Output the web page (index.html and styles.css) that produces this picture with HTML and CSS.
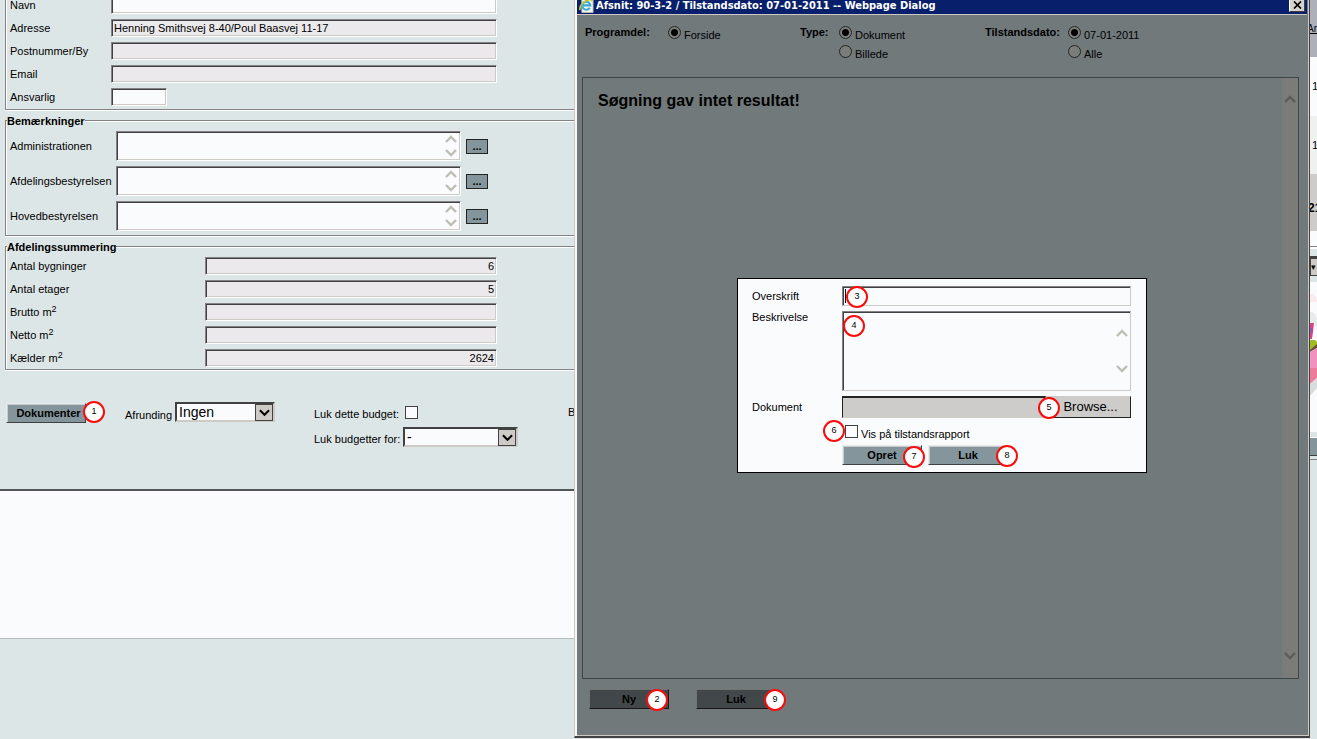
FILE: index.html
```html
<!DOCTYPE html>
<html lang="da">
<head>
<meta charset="utf-8">
<title>Afdeling</title>
<link rel="stylesheet" href="styles.css">
</head>
<body>
<svg class="defs" aria-hidden="true">
  <symbol id="up" viewBox="0 0 12 8"><path d="M1 7L6 2L11 7" fill="none" stroke="currentColor" stroke-width="2.4"/></symbol>
  <symbol id="down" viewBox="0 0 12 8"><path d="M1 1L6 6L11 1" fill="none" stroke="currentColor" stroke-width="2.4"/></symbol>
</svg>
<div class="page">
  <main class="form">
    <fieldset class="group group-first">
      <div class="row"><label class="name" for="navn">Navn</label><input class="box" id="navn" type="text"></div>
      <div class="row"><label class="name" for="adr">Adresse</label><input class="box locked" id="adr" type="text" readonly value="Henning Smithsvej 8-40/Poul Baasvej 11-17"></div>
      <div class="row"><label class="name" for="post">Postnummer/By</label><input class="box locked" id="post" type="text" readonly></div>
      <div class="row"><label class="name" for="email">Email</label><input class="box locked" id="email" type="text" readonly></div>
      <div class="row"><label class="name" for="ansv">Ansvarlig</label><input class="box short" id="ansv" type="text"></div>
    </fieldset>
    <fieldset class="group notes">
      <legend>Bemærkninger</legend>
      <div class="row"><label class="name" for="adm">Administrationen</label><div class="area"><textarea class="box" id="adm"></textarea><span class="arrows"><svg><use href="#up"/></svg><svg><use href="#down"/></svg></span></div><button class="more" type="button">...</button></div>
      <div class="row"><label class="name" for="afd">Afdelingsbestyrelsen</label><div class="area"><textarea class="box" id="afd"></textarea><span class="arrows"><svg><use href="#up"/></svg><svg><use href="#down"/></svg></span></div><button class="more" type="button">...</button></div>
      <div class="row"><label class="name" for="hov">Hovedbestyrelsen</label><div class="area"><textarea class="box" id="hov"></textarea><span class="arrows"><svg><use href="#up"/></svg><svg><use href="#down"/></svg></span></div><button class="more" type="button">...</button></div>
    </fieldset>
    <fieldset class="group sums">
      <legend>Afdelingssummering</legend>
      <div class="row"><label class="name" for="byg">Antal bygninger</label><input class="box locked" id="byg" type="text" readonly value="6"></div>
      <div class="row"><label class="name" for="eta">Antal etager</label><input class="box locked" id="eta" type="text" readonly value="5"></div>
      <div class="row"><label class="name" for="bru">Brutto m<sup>2</sup></label><input class="box locked" id="bru" type="text" readonly></div>
      <div class="row"><label class="name" for="net">Netto m<sup>2</sup></label><input class="box locked" id="net" type="text" readonly></div>
      <div class="row"><label class="name" for="kae">Kælder m<sup>2</sup></label><input class="box locked" id="kae" type="text" readonly value="2624"></div>
    </fieldset>
    <div class="tools">
      <span class="anchor"><button class="btn main" type="button">Dokumenter</button><span class="badge side">1</span></span>
      <div class="rounding">
        <label for="afr">Afrunding</label>
        <span class="pick"><select id="afr"><option>Ingen</option></select><span class="drop"><svg viewBox="0 0 12 8"><path d="M1 1L6 6L11 1" fill="none" stroke="#000" stroke-width="2.2"/></svg></span></span>
      </div>
      <div class="closing">
        <div class="line"><label for="luk">Luk dette budget:</label><input class="check" id="luk" type="checkbox"></div>
        <div class="line"><label for="lukfor">Luk budgetter for:</label><span class="pick wide"><select id="lukfor"><option>-</option></select><span class="drop"><svg viewBox="0 0 12 8"><path d="M1 1L6 6L11 1" fill="none" stroke="#000" stroke-width="2.2"/></svg></span></span></div>
      </div>
      <span class="next">B</span>
    </div>
    <div class="sheet"></div>
  </main>

  <section class="dialog" role="dialog" aria-labelledby="dlg-title">
    <header class="titlebar">
      <svg class="ie" viewBox="0 0 16 16"><path d="M3 0h9l3 3v13H3z" fill="#f4f4ee" stroke="#b9b9ae"/><path d="M11.500 11a4.300 4.300 0 1 1 .6-2.600H4.500" fill="none" stroke="#39a9dc" stroke-width="2.200"/><path d="M1 13.500C0 9 5 3 12 2c2 0 2 1 1 2" fill="none" stroke="#c4c832" stroke-width="1.700"/></svg>
      <h1 id="dlg-title">Afsnit: 90-3-2 / Tilstandsdato: 07-01-2011 -- Webpage Dialog</h1>
      <button class="close" type="button" aria-label="Luk vindue"><svg viewBox="0 0 9 8"><path d="M1 0.500L8 7.500M8 0.500L1 7.500" stroke="#000" stroke-width="1.700"/></svg></button>
    </header>
    <div class="filters">
      <div class="filter"><b>Programdel:</b><div class="options"><label><input type="radio" name="del" checked><span>Forside</span></label></div></div>
      <div class="filter"><b>Type:</b><div class="options"><label><input type="radio" name="type" checked><span>Dokument</span></label><label><input type="radio" name="type"><span>Billede</span></label></div></div>
      <div class="filter"><b>Tilstandsdato:</b><div class="options"><label><input type="radio" name="dato" checked><span>07-01-2011</span></label><label><input type="radio" name="dato"><span>Alle</span></label></div></div>
    </div>
    <div class="results">
      <h2>Søgning gav intet resultat!</h2>
      <div class="track"><svg><use href="#up"/></svg><svg><use href="#down"/></svg></div>
    </div>
    <footer class="actions">
      <span class="anchor"><button class="btn dark" type="button">Ny</button><span class="badge inner">2</span></span>
      <span class="anchor"><button class="btn dark" type="button">Luk</button><span class="badge edge">9</span></span>
    </footer>
    <div class="veil">
      <form class="modal">
        <label for="over">Overskrift</label>
        <div class="anchor"><input class="box" id="over" type="text"><i class="caret"></i><span class="badge b3">3</span></div>
        <label for="besk">Beskrivelse</label>
        <div class="area tall"><textarea class="box" id="besk"></textarea><span class="arrows"><svg><use href="#up"/></svg><svg><use href="#down"/></svg></span><span class="badge b4">4</span></div>
        <label for="dok">Dokument</label>
        <div class="file"><input id="dok" type="text" readonly><span class="anchor"><button type="button">Browse...</button><span class="badge b5">5</span></span></div>
        <div class="field anchor tick"><input class="check" id="vis" type="checkbox"><label for="vis">Vis på tilstandsrapport</label><span class="badge b6">6</span></div>
        <div class="field pair">
          <span class="anchor"><button class="btn" type="button">Opret</button><span class="badge near">7</span></span>
          <span class="anchor"><button class="btn" type="button">Luk</button><span class="badge edge">8</span></span>
        </div>
      </form>
    </div>
  </section>

  <aside class="strip">
    <div class="head"><a href="#">Ar</a></div>
    <div class="cell">1</div>
    <div class="cell alt">1</div>
    <div class="cell total">21</div>
    <div class="rest"></div>
    <div class="gap"></div>
    <button class="knob" type="button" aria-label="Vis">▾</button>
    <svg class="flower" viewBox="0 0 7 150" preserveAspectRatio="none"><rect width="7" height="150" fill="#fafbfd"/><path d="M0 12h3q4 3 4 8H0z" fill="#fbe9ee"/><path d="M0 30q7 0 7 10v6q-3-6-7-6z" fill="#e8ebec"/><path d="M0 41h4l-1 9-1 7H0z" fill="#d8438f"/><path d="M1 46h1v5H1z" fill="#5a6cc0"/><path d="M0 58h5l2 2v4l-7 5z" fill="#a3ba24"/><path d="M0 68L7 62v4l-7 4z" fill="#665047"/><path d="M0 70l7-4v20H0z" fill="#f091c0"/><path d="M0 86h7v10l-7 6z" fill="#ed7c9c"/><path d="M0 102l7-6v10l-7 8z" fill="#d9dcde"/></svg>
    <div class="bar"></div>
    <div class="end"></div>
  </aside>
</div>
</body>
</html>
```
FILE: styles.css
```css
* { box-sizing: border-box; }
body {
  margin: 0;
  background: #dde6e6;
  color: #000;
  font: 11px/13px "Liberation Sans", Arial, sans-serif;
}
button, input, select, textarea { font: inherit; color: inherit; margin: 0; border-radius: 0; }
svg { display: block; }
.defs { position: absolute; width: 0; height: 0; }
.page {
  display: grid;
  grid-template-columns: 574fr 736fr 7px;
  height: 100vh;
  min-height: 640px;
  overflow: hidden;
}
.anchor { position: relative; }

/* Form behind the dialog */
.form { min-width: 0; overflow: hidden; }
.group {
  display: flex;
  flex-direction: column;
  gap: 5px;
  min-width: 0;
  margin: 0 0 4px 5px;
  padding: 4px 0 4px 4px;
  border: 1px solid #848284;
  border-right: 0;
  box-shadow: 0 1px 0 #fff, inset 1px 1px 0 #fff;
}
.group-first { margin-top: -5px; padding: 0 0 3px 4px; }
.sums { padding-bottom: 2px; }
legend {
  height: 13px;
  margin-left: -3px;
  padding: 0;
  background: #dde6e6;
  font-weight: bold;
  line-height: 15px;
}
.row { display: flex; align-items: center; }
.name { flex: none; width: 101px; white-space: nowrap; }
.notes .name { width: 106px; }
.sums .name { width: 195px; }
sup { font-size: 9px; line-height: 0; vertical-align: 4px; }
.box {
  display: block;
  width: 386px;
  height: 18px;
  padding: 0 2px;
  background: #fafbfd;
  border: 1px solid;
  border-color: #848284 #fff #fff #848284;
  box-shadow: inset 1px 1px 0 #424142, inset -1px -1px 0 #cecbc6;
  outline: 0;
  resize: none;
}
.box.locked { background: #ebe9eb; }
.row .short { width: 56px; }
.sums .box { width: 292px; text-align: right; }
.area { position: relative; width: 345px; }
.area .box { width: 100%; height: 30px; overflow: hidden; }
.arrows {
  position: absolute;
  top: 4px;
  right: 4px;
  bottom: 4px;
  width: 12px;
  display: flex;
  flex-direction: column;
  justify-content: space-between;
  color: #bdbeb5;
}
.arrows svg, .track svg { width: 12px; height: 8px; }
.more {
  width: 22px;
  height: 15px;
  margin-left: 5px;
  padding: 0;
  border: 1px solid #212421;
  background: #84969c;
  font-weight: bold;
  line-height: 13px;
}

.btn {
  display: block;
  width: 80px;
  height: 20px;
  padding: 0;
  border: 1px solid;
  border-color: #e7ebeb #424142 #424142 #e7ebeb;
  box-shadow: inset 1px 1px 0 #c6cbce;
  background: #84969c;
  font-weight: bold;
}
.btn.main { margin-top: 1px; padding-left: 5px; }
.btn.dark {
  background: #424849;
  border-color: #737573 #181818 #181818 #737573;
  box-shadow: none;
}
.tools { display: flex; align-items: flex-start; margin: 32px 0 0 6px; height: 87px; }
.tools label { white-space: nowrap; }
.rounding { display: flex; margin-left: 39px; gap: 3px; }
.rounding label { width: 47px; padding-top: 7px; }
.pick { position: relative; display: block; width: 100px; height: 20px; }
.pick.wide { width: 115px; }
.pick select {
  appearance: none;
  display: block;
  width: 100%;
  height: 100%;
  padding: 0 20px 0 2px;
  border: 2px solid;
  border-color: #424142 #cecbc6 #cecbc6 #424142;
  background: #fafbfd;
  font-size: 14px;
  line-height: 16px;
  outline: 0;
}
.drop {
  position: absolute;
  top: 2px;
  right: 2px;
  bottom: 1px;
  width: 18px;
  display: grid;
  place-items: center;
  background: #cecbc6;
  border: 1px solid #424142;
  pointer-events: none;
}
.drop svg { width: 11px; height: 8px; }
.closing { margin-left: 39px; display: flex; flex-direction: column; gap: 5px; }
.line { display: flex; align-items: center; height: 20px; }
.line label { width: 89px; padding-top: 5px; }
.line .check { margin: 0 2px; }
.check {
  appearance: none;
  flex: none;
  width: 13px;
  height: 13px;
  border: 1px solid #424142;
  background: #fafbfd;
}
.next { margin: 4px 0 0 auto; width: 6px; overflow: hidden; }
.sheet {
  height: 150px;
  background: #fafbfd;
  border-top: 2px solid #555759;
  border-bottom: 1px solid #b5babd;
}

.badge {
  position: absolute;
  width: 22px;
  height: 22px;
  border: 2px solid #f80c0c;
  border-radius: 50%;
  background: #fff;
  font-size: 9px;
  line-height: 16px;
  text-align: center;
  z-index: 1;
}
.side { left: 77px; top: -1px; }
.inner { right: 1px; top: 0; }
.edge { right: -10px; top: 0; }
.near { right: -3px; top: 1px; }
.b3 { left: 4px; top: 0; }
.b4 { left: 1px; top: 4px; }
.b5 { left: -8px; top: 1px; }
.b6 { left: -19px; top: -3px; }

/* Dialog window */
.dialog {
  position: relative;
  display: flex;
  flex-direction: column;
  min-width: 0;
  margin-bottom: 1px;
  background: #71797b;
  border: 1px solid #cecbc6;
  border-right-color: #424142;
  border-bottom: 2px solid #424142;
  border-top: 0;
  box-shadow: inset 2px 0 0 #f7f7f3, inset -1px -1px 0 #cecbc6;
}
.titlebar {
  display: flex;
  align-items: flex-start;
  gap: 2px;
  height: 15px;
  margin: 0 2px;
  padding: 0 2px;
  overflow: hidden;
  background: #08206b;
  border-bottom: 1px solid #cecbc6;
  color: #fff;
}
.ie { width: 15px; height: 16px; margin-top: -3px; flex: none; }
h1 {
  flex: 1;
  margin: 0;
  font: bold 11px/11px "DejaVu Sans Condensed", "DejaVu Sans", sans-serif;
  white-space: nowrap;
}
.close {
  width: 16px;
  height: 14px;
  margin-top: -2px;
  padding: 2px 3px;
  background: #d6d3ce;
  border: 1px solid;
  border-color: #fff #424142 #424142 #fff;
}
.close svg { width: 9px; height: 8px; }
.filters {
  display: grid;
  grid-template-columns: 215px 185px 1fr;
  padding: 11px 0 0 10px;
  height: 62px;
}
.filter { display: flex; }
.options { display: flex; flex-direction: column; gap: 6px; }
.filter b { width: 83px; }
.filter:nth-child(2) b { width: 39px; }
.options label { display: flex; gap: 3px; height: 13px; }
.options span { padding-top: 3px; }
.options input {
  appearance: none;
  width: 13px;
  height: 13px;
  border: 1px solid #212421;
  border-radius: 50%;
  background: #7b7d7b;
}
.options input:checked { background: radial-gradient(circle, #000 0 3px, #7b7d7b 4px); }
.results {
  flex: 1;
  display: flex;
  justify-content: space-between;
  margin: 0 10px 0 7px;
  border: 1px solid #424546;
}
h2 { margin: 13px 0 0 15px; font-size: 16px; line-height: 20px; }
.track {
  display: flex;
  flex-direction: column;
  justify-content: space-between;
  align-items: center;
  width: 16px;
  padding: 17px 0 18px;
  background: #7b7b79;
  color: #5a5d5a;
}
.actions { display: flex; gap: 27px; padding: 10px 14px 27px; }

.veil {
  position: absolute;
  inset: 0;
  display: grid;
  place-items: center;
  padding-top: 15px;
}
.modal {
  display: grid;
  grid-template-columns: 90px 1fr;
  row-gap: 5px;
  width: 410px;
  padding: 7px 15px 7px 14px;
  border: 1px solid #000;
  background: #fafbfd;
}
.modal > label { padding-top: 4px; }
.modal > label[for="besk"] { padding-top: 0; }
.modal > label[for="dok"] { padding-top: 5px; }
.modal .box { width: 100%; height: 20px; border-color: #848284 #cecbc6 #cecbc6 #848284; box-shadow: inset 1px 1px 0 #424142; }
.modal .tall { width: 100%; }
.modal .tall .box { height: 80px; }
.tall .arrows { top: 18px; right: 3px; bottom: 18px; }
.caret { position: absolute; left: 3px; top: 3px; width: 1px; height: 14px; background: #000; }
.file { display: flex; height: 22px; }
.file input {
  flex: 1;
  min-width: 0;
  border: 1px solid;
  border-color: #212421 #cecbc6 #cecbc6 #212421;
  border-top-width: 2px;
  background: #cecccb;
  outline: 0;
}
.file button {
  width: 85px;
  height: 22px;
  padding: 0 0 2px 4px;
  background: #cecccb;
  border: 1px solid;
  border-color: #cecccb #212421 #212421 #cecccb;
  font-size: 13px;
}
.field { grid-column: 2; }
.tick { display: flex; gap: 3px; height: 17px; padding: 2px 0 0 3px; }
.tick label { padding-top: 3px; white-space: nowrap; }
.pair { display: flex; gap: 6px; }

/* Sliver of the page right of the dialog */
.strip { overflow: hidden; min-width: 0; }
.head { height: 57px; padding-top: 22px; background: #adb0b9; }
.head a { display: block; margin-left: -3px; color: #000; font-size: 10px; white-space: nowrap; }
.cell { height: 59px; padding: 23px 0 0 2px; background: #fafbfd; }
.cell.alt { height: 58px; background: #eff1f1; }
.cell.total { height: 57px; padding: 28px 0 0; background: #cecbcb; font-weight: bold; font-size: 12px; text-indent: -2px; }
.rest { height: 16px; background: #fafbfd; border-bottom: 1px solid #848284; }
.gap { height: 11px; border-top: 2px solid #fff; border-bottom: 2px solid #424142; }
.knob {
  display: block;
  width: 20px;
  height: 18px;
  padding: 0;
  border: 1px solid #424142;
  background: #cecbc6;
  font-size: 9px;
  text-align: left;
}
.flower { width: 7px; height: 150px; margin-top: 6px; }
.bar { height: 19px; margin-top: 5px; background: #84969c; border-bottom: 1px solid #424142; border-top: 1px solid #fff; }
.end { height: 4px; border-bottom: 1px solid #848284; }
```
